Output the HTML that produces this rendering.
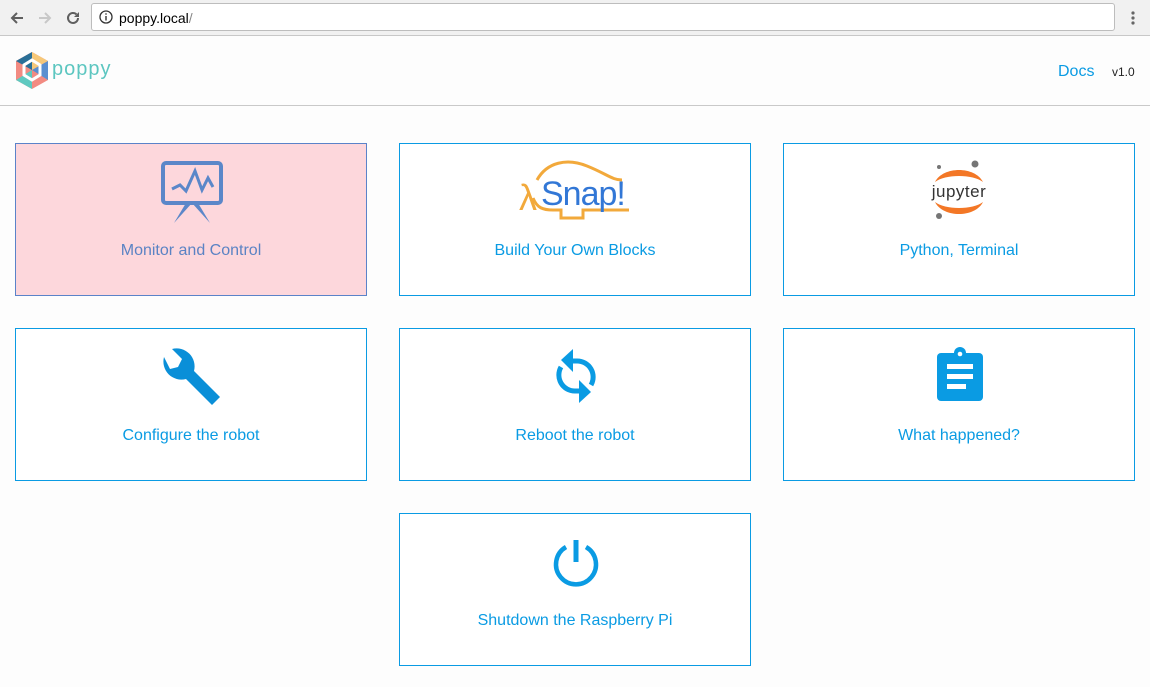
<!DOCTYPE html>
<html><head><meta charset="utf-8"><style>
*{box-sizing:border-box;margin:0;padding:0}
body{width:1150px;height:687px;overflow:hidden;background:#fdfdfd;font-family:"Liberation Sans",sans-serif;position:relative}
.chrome{position:absolute;left:0;top:0;width:1150px;height:36px;background:#f1f1f1;border-bottom:1px solid #c8c8c8}
.url{position:absolute;left:91px;top:3px;width:1024px;height:28px;background:#fff;border:1px solid #bdbdbd;border-radius:3px;font-size:14px;color:#000;padding:6px 0 0 27px}
.hdr{position:absolute;left:0;top:105px;width:1150px;height:1px;background:#c9c9c9}
.card{position:absolute;width:352px;height:153px;border:1px solid #0a9be3;background:#fff;color:#0a9be3;font-size:16px;text-align:center}
.card .t{position:absolute;left:0;right:0;top:98px}
.card svg{position:absolute}
</style></head><body>
<div class="chrome">
<svg style="position:absolute;left:9px;top:10px" width="16" height="16" viewBox="0 0 16 16"><path d="M14 8H3M8 3L3 8l5 5" fill="none" stroke="#5f5f5f" stroke-width="2"/></svg>
<svg style="position:absolute;left:37px;top:10px" width="16" height="16" viewBox="0 0 16 16"><path d="M2 8h11M8 3l5 5-5 5" fill="none" stroke="#c8c8c8" stroke-width="2"/></svg>
<svg style="position:absolute;left:65px;top:10px" width="16" height="16" viewBox="0 0 16 16"><path d="M13 8a5 5 0 1 1-1.5-3.6" fill="none" stroke="#5f5f5f" stroke-width="2"/><path d="M14 2v5h-5z" fill="#5f5f5f"/></svg>
<div class="url"><svg style="position:absolute;left:7px;top:6px" width="14" height="14" viewBox="0 0 14 14"><circle cx="7" cy="7" r="6" fill="none" stroke="#333" stroke-width="1.3"/><rect x="6.3" y="6" width="1.4" height="4.5" fill="#333"/><rect x="6.3" y="3.3" width="1.4" height="1.4" fill="#333"/></svg>poppy.local<span style="color:#888">/</span></div>
<svg style="position:absolute;left:1130px;top:10px" width="6" height="16"><circle cx="3" cy="3" r="1.6" fill="#666"/><circle cx="3" cy="8" r="1.6" fill="#666"/><circle cx="3" cy="13" r="1.6" fill="#666"/></svg>
</div>
<svg style="position:absolute;left:14px;top:51px" width="36" height="39" viewBox="0 0 36 39">
<polygon points="18,1 34,10 34,29 18,38 2,29 2,10" fill="#f28b82"/>
<polygon points="18,1 34,10 18,19" fill="#f6c879"/>
<polygon points="18,1 2,10 18,19" fill="#2a6f97"/>
<polygon points="34,10 34,29 18,19" fill="#5a8fd0"/>
<polygon points="2,29 18,38 18,19" fill="#5fc9c0"/>
<polygon points="18,9 26,14 26,24 18,29 10,24 10,14" fill="none" stroke="#fff" stroke-width="3"/>
</svg>
<div style="position:absolute;left:52px;top:58px;font-size:20px;color:#5cc6c0;letter-spacing:1px">poppy</div>
<div style="position:absolute;left:1058px;top:63px;font-size:16px;color:#0a9be3">Docs</div>
<div style="position:absolute;left:1112px;top:65px;font-size:12px;color:#222">v1.0</div>
<div class="hdr"></div>

<div class="card" style="left:15px;top:143px;background:#fdd7dc;border-color:#5b83c9;color:#5b83c4">
<svg style="left:144px;top:16px" width="64" height="64" viewBox="0 0 64 64"><rect x="3" y="3" width="58" height="40" rx="3" fill="none" stroke="#5b87c9" stroke-width="4"/><path d="M12 29l8-4 6 6 9-20 7 19 6-12 5 9" fill="none" stroke="#5b87c9" stroke-width="3"/><path d="M26 43l-12 20 18-20zM38 43l12 20-18-20z" fill="#5b87c9"/></svg>
<div class="t">Monitor and Control</div></div>

<div class="card" style="left:399px;top:143px">
<svg style="left:117px;top:14px" width="120" height="66" viewBox="0 0 120 66"><path d="M20 22C30 4 50 0 70 8S95 22 105 22" fill="none" stroke="#f2a93b" stroke-width="3"/><path d="M16 40c4 10 10 12 20 12h8v8h22v-8h46" fill="none" stroke="#f2a93b" stroke-width="3"/><text x="2" y="52" font-family="Liberation Sans" font-size="36" fill="#f2a93b">λ</text><text x="24" y="47" font-family="Liberation Sans" font-size="34" fill="#3277d6" letter-spacing="-1">Snap!</text></svg>
<div class="t">Build Your Own Blocks</div></div>

<div class="card" style="left:783px;top:143px">
<svg style="left:143px;top:14px" width="66" height="66" viewBox="0 0 66 66"><circle cx="48" cy="6" r="3.5" fill="#757575"/><circle cx="12" cy="9" r="2" fill="#757575"/><circle cx="12" cy="58" r="3" fill="#757575"/><path d="M8 24C16 8 48 8 56 24C46 16 18 16 8 24z" fill="#f37726"/><path d="M8 44C16 60 48 60 56 44C46 52 18 52 8 44z" fill="#f37726"/><text x="32" y="39" text-anchor="middle" font-family="Liberation Sans" font-size="17" letter-spacing="0.5" fill="#333">jupyter</text></svg>
<div class="t">Python, Terminal</div></div>

<div class="card" style="left:15px;top:328px">
<svg style="left:144px;top:18px" width="62" height="60" viewBox="0 0 62 60"><path d="M4 10a18 18 0 0 0 22 22l26 26 8-8-26-26A18 18 0 0 0 12 2l10 10-4 8-8 2z" fill="#0a8fd8"/></svg>
<div class="t">Configure the robot</div></div>

<div class="card" style="left:399px;top:328px">
<svg style="left:151px;top:18px" width="50" height="58" viewBox="0 0 50 58"><path d="M22 14h4a16 16 0 0 1 14 24" fill="none" stroke="#0a9be3" stroke-width="5"/><path d="M10 13L22 2v23z" fill="#0a9be3"/><path d="M28 44h-4A16 16 0 0 1 10 20" fill="none" stroke="#0a9be3" stroke-width="5"/><path d="M40 45L28 56V33z" fill="#0a9be3"/></svg>
<div class="t">Reboot the robot</div></div>

<div class="card" style="left:783px;top:328px">
<svg style="left:151px;top:18px" width="50" height="56" viewBox="0 0 50 56"><rect x="2" y="6" width="46" height="48" rx="4" fill="#0a9be3"/><circle cx="25" cy="6" r="6" fill="#0a9be3"/><circle cx="25" cy="7" r="2.3" fill="#fff"/><rect x="12" y="17" width="26" height="5" fill="#fff"/><rect x="12" y="27" width="26" height="5" fill="#fff"/><rect x="12" y="37" width="19" height="5" fill="#fff"/></svg>
<div class="t">What happened?</div></div>

<div class="card" style="left:399px;top:513px">
<svg style="left:151px;top:24px" width="50" height="50" viewBox="0 0 50 50"><path d="M15 9A20 20 0 1 0 35 9" fill="none" stroke="#0a9be3" stroke-width="4.5"/><rect x="22.5" y="2" width="5" height="22" fill="#0a9be3"/></svg>
<div class="t">Shutdown the Raspberry Pi</div></div>
</body></html>
